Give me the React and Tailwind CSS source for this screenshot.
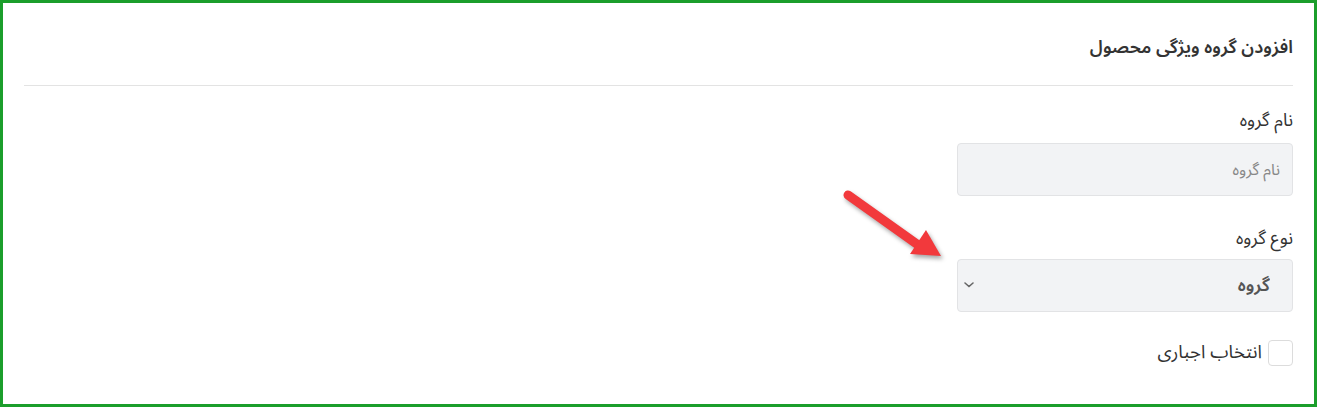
import { useState } from "react";

const Arrow = () => (
  <svg
    className="absolute left-[836px] top-[180px] pointer-events-none"
    width="120"
    height="90"
    viewBox="0 0 120 90"
    style={{ filter: "drop-shadow(2px 3px 2px rgba(0,0,0,0.35))" }}
  >
    <line x1="9" y1="12" x2="82" y2="64" stroke="#f2393c" strokeWidth="9" strokeLinecap="round" />
    <polygon points="102,73 71,71 87,47" fill="#f2393c" />
  </svg>
);

const App = () => {
  const [name, setName] = useState("");
  const [required, setRequired] = useState(false);

  return (
    <div
      className="relative h-[407px] w-full border-[3px] border-[#1b9e2b] bg-white px-[21px] text-[#333]"
      style={{ fontFamily: '"Noto Sans Arabic", "DejaVu Sans", sans-serif' }}
      dir="rtl"
    >
      <div className="border-b border-[#e3e3e3] pt-[31px] pb-[25px]">
        <h1 className="text-[18px] font-semibold leading-[26px] text-[#333]">
          افزودن گروه ویژگی محصول
        </h1>
      </div>

      <div className="w-[336px] pt-[22px]">
        <label htmlFor="groupName" className="mb-[11px] block text-[18px] leading-[24px] text-[#333]">
          نام گروه
        </label>
        <input
          id="groupName"
          value={name}
          onChange={(e) => setName(e.target.value)}
          placeholder="نام گروه"
          className="h-[53px] w-full rounded-[4px] border border-[#e2e3e5] bg-[#f2f3f5] px-[12px] text-[16px] text-[#555] placeholder-[#888] focus:outline-none"
        />

        <label htmlFor="groupType" className="mt-[30px] mb-[9px] block text-[18px] leading-[24px] text-[#333]">
          نوع گروه
        </label>
        <div className="relative">
          <select
            id="groupType"
            className="h-[53px] w-full appearance-none rounded-[4px] border border-[#e2e3e5] bg-[#f2f3f5] pr-[22px] pl-[36px] text-[18px] font-semibold text-[#555] focus:outline-none"
          >
            <option>گروه</option>
          </select>
          <svg
            className="pointer-events-none absolute left-[6px] top-[22px]"
            width="12"
            height="8"
            viewBox="0 0 12 8"
          >
            <path d="M2 2l4 3.5L10 2" fill="none" stroke="#666" strokeWidth="1.6" strokeLinecap="round" />
          </svg>
        </div>

        <label className="mt-[28px] flex items-center gap-[6px] text-[18.5px] leading-[26px] text-[#333]">
          <input
            type="checkbox"
            checked={required}
            onChange={(e) => setRequired(e.target.checked)}
            className="h-[26px] w-[25px] shrink-0 appearance-none rounded-[4px] border border-[#dcdcdc] bg-white"
          />
          <span>انتخاب اجباری</span>
        </label>
      </div>

      <Arrow />
    </div>
  );
};

export default App;
